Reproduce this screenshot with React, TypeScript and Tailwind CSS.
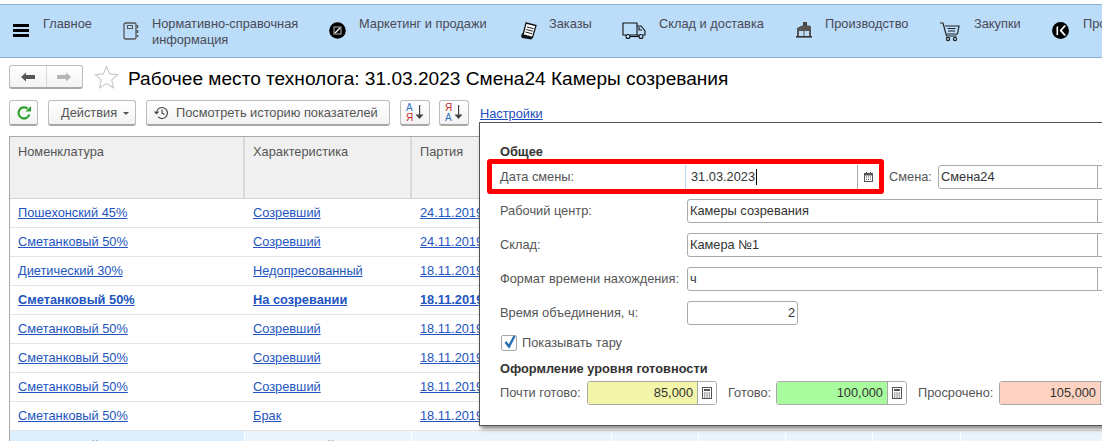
import type { ReactNode } from "react";

const Notebook = () => (
  <svg width="16" height="18" viewBox="0 0 16 18" fill="none" stroke="#555" strokeWidth="1.3">
    <rect x="1" y="1" width="12" height="16" rx="1.5" />
    <rect x="4.5" y="3.5" width="5" height="3" strokeWidth="1" />
    <path d="M14.5 3v3M14.5 8v3M14.5 13v2" strokeWidth="1.5" />
  </svg>
);

const Marketing = () => (
  <svg width="17" height="17" viewBox="0 0 17 17">
    <circle cx="8.5" cy="8.5" r="8.3" fill="#000" />
    <rect x="5" y="5" width="7" height="7" fill="none" stroke="#999" strokeWidth="1.2" />
    <path d="M6 11l5-5" stroke="#fff" strokeWidth="1.2" />
  </svg>
);

const Orders = () => (
  <svg width="17" height="18" viewBox="0 0 17 18" fill="none">
    <path d="M6 1l10 2.500-3.500 12L3 13z" fill="#fff" stroke="#111" strokeWidth="1.3" />
    <path d="M7 5l6.500 1.700M6.200 7.500l6.500 1.700M5.500 10l6.500 1.700" stroke="#222" strokeWidth="1" />
    <path d="M1 14l1.500-3.500L3 13l9.500 2.500-1 2L2 16z" fill="#111" />
  </svg>
);

const Truck = () => (
  <svg width="24" height="18" viewBox="0 0 24 18" fill="none" stroke="#111" strokeWidth="1.1">
    <path d="M4 13H1V1h14v12H8" />
    <path d="M15 4h4l1 1 3 4v4h-2M15 13h2" />
    <path d="M17 5v3h3" />
    <circle cx="6" cy="14.5" r="2" />
    <circle cx="19" cy="14.5" r="2" />
    <path d="M8 14.5h9" />
  </svg>
);

const Factory = () => (
  <svg width="16" height="16" viewBox="0 0 16 16">
    <path d="M7 0h4v4H7z" fill="#444" />
    <path d="M1 6l5-2.500h8l1 1.500v9H1z" fill="#555" />
    <rect x="3" y="9" width="4.500" height="5" fill="#bbddfa" />
    <rect x="8.500" y="9" width="4.500" height="5" fill="#bbddfa" />
    <rect y="14" width="16" height="1.6" fill="#333" />
  </svg>
);

const Cart = () => (
  <svg width="20" height="20" viewBox="0 0 20 20" fill="none" stroke="#222" strokeWidth="1.2">
    <path d="M0 1h3l3.5 13h10" />
    <path d="M5 4h14l-1.5 8H7" />
    <path d="M7.5 6.5h8M8 9h7" />
    <circle cx="8" cy="17" r="1.6" />
    <circle cx="15" cy="17" r="1.6" />
  </svg>
);

const KLogo = () => (
  <svg width="17" height="17" viewBox="0 0 17 17">
    <circle cx="8.5" cy="8.5" r="8.4" fill="#000" />
    <path d="M4.5 5l1.6-1v9H4.5z" fill="#fff" />
    <path d="M7.5 8.5L12 3.5h2.3L10 8.5l4.3 5H12z" fill="#fff" />
  </svg>
);

const Calendar = () => (
  <svg width="9" height="10" viewBox="0 0 9 10">
    <path d="M0 1h9v9H0z" fill="#555" />
    <path d="M1 3.5h7V9H1z" fill="#fff" />
    <path d="M2 4.5h1v1H2zM4 4.5h1v1H4zM6 4.5h1v1H6zM2 6.8h1v1H2zM4 6.8h1v1H4zM6 6.8h1v1H6z" fill="#555" />
    <path d="M2 0h1v2H2zM6 0h1v2H6z" fill="#555" />
  </svg>
);

const Calculator = () => (
  <svg width="10" height="12" viewBox="0 0 10 12">
    <rect x=".5" y=".5" width="9" height="11" fill="#fff" stroke="#555" />
    <path d="M2 2h6v2H2z" fill="#555" />
    <path d="M2 5.5h1.4v1H2zM4.3 5.5h1.4v1H4.3zM6.6 5.5H8v1H6.6zM2 7.5h1.4v1H2zM4.3 7.5h1.4v1H4.3zM6.6 7.5H8v1H6.6zM2 9.5h1.4v1H2zM4.3 9.5h1.4v1H4.3zM6.6 9.5H8v1H6.6z" fill="#555" />
  </svg>
);

const SortArrow = () => (
  <svg width="9" height="15" viewBox="0 0 9 15">
    <path d="M4 0h1.200v10H4z" fill="#444" />
    <path d="M0.500 9.500h8L4.500 14z" fill="#444" />
  </svg>
);

const btn =
  "flex items-center rounded-[3px] border border-[#bdbdbd] border-b-2 border-b-[#a8a8a8] bg-gradient-to-b from-white to-[#f3f3f3]";

const NavItem = ({ icon, iconBox, label, width }: { icon?: ReactNode; iconBox: string; label: ReactNode; width: string }) => (
  <div className={`flex shrink-0 ${width}`}>
    <div className={`flex shrink-0 pt-[17px] ${iconBox}`}>{icon}</div>
    <div className="pt-[11px] text-[#4a4a55] whitespace-nowrap">{label}</div>
  </div>
);

const Field = ({ label, children }: { label: string; children: ReactNode }) => (
  <div className="flex items-center h-[24px] mt-[10px]">
    <div className="w-[187px] shrink-0 whitespace-nowrap text-[#555]">{label}</div>
    {children}
  </div>
);

const BigInput = ({ value }: { value: string }) => (
  <div className="flex flex-1 h-[24px] items-center rounded-[3px] border border-[#a9a9a9] bg-white -mr-[20px] pl-[2px] text-[#333]">
    <span className="flex-1">{value}</span>
    <span className="h-full w-[20px] border-l border-[#a9a9a9]" />
  </div>
);

const NumField = ({ value, color, width, cell }: { value: string; color: string; width: string; cell: string }) => (
  <div className={`flex h-[24px] shrink-0 rounded-[3px] border border-[#a9a9a9] overflow-hidden ${width}`}>
    <div className={`flex shrink-0 items-center justify-end pr-[4px] text-[#333] ${cell} ${color}`}>{value}</div>
    <div className="flex flex-1 items-center justify-center border-l border-[#a9a9a9] bg-white">
      <Calculator />
    </div>
  </div>
);

const rows = [
  ["Пошехонский 45%", "Созревший", "24.11.2019"],
  ["Сметанковый 50%", "Созревший", "24.11.2019"],
  ["Диетический 30%", "Недопресованный", "18.11.2019"],
  ["Сметанковый 50%", "На созревании", "18.11.2019"],
  ["Сметанковый 50%", "Созревший", "18.11.2019"],
  ["Сметанковый 50%", "Созревший", "18.11.2019"],
  ["Сметанковый 50%", "Созревший", "18.11.2019"],
  ["Сметанковый 50%", "Брак", "18.11.2019"],
];

const cols = "grid grid-cols-[235px_167px_200px_87px_87px_87px_88px_140px]";

export default function App() {
  return (
    <div className="relative w-[1102px] h-[441px] overflow-hidden bg-white text-[12.8px] leading-[16px] font-['Liberation_Sans',Arial,sans-serif]">
      {/* top sections bar */}
      <div className="mt-[4px] flex h-[54px] border-y border-[#8fb0d0] bg-[#bbddfa]">
        <div className="flex w-[43px] shrink-0 flex-col gap-[2px] pl-[13px] pt-[19px]">
          <div className="h-[3px] w-[16px] bg-black" />
          <div className="h-[3px] w-[16px] bg-black" />
          <div className="h-[3px] w-[16px] bg-black" />
        </div>
        <NavItem width="w-[80px]" iconBox="" label="Главное" />
        <NavItem width="w-[206px]" iconBox="w-[29px]" icon={<Notebook />} label={<>Нормативно-справочная<br />информация</>} />
        <NavItem width="w-[191px]" iconBox="w-[30px]" icon={<Marketing />} label="Маркетинг и продажи" />
        <NavItem width="w-[102px]" iconBox="w-[29px]" icon={<Orders />} label="Заказы" />
        <NavItem width="w-[174px]" iconBox="w-[37px]" icon={<Truck />} label="Склад и доставка" />
        <NavItem width="w-[144px]" iconBox="w-[29px]" icon={<Factory />} label="Производство" />
        <NavItem width="w-[112px]" iconBox="w-[34px]" icon={<Cart />} label="Закупки" />
        <NavItem width="w-[60px]" iconBox="w-[31px]" icon={<KLogo />} label="Продажи" />
      </div>

      {/* title */}
      <div className="flex h-[32px] items-center pl-[9px] pt-[3px] box-content">
        <div className={`${btn} h-[24px] w-[74px]`}>
          <div className="flex h-full flex-1 items-center justify-center border-r border-[#d8d8d8]">
            <svg width="14" height="10" viewBox="0 0 14 10"><path d="M0 5l5-4.5V3h9v4H5v2.500z" fill="#555" /></svg>
          </div>
          <div className="flex h-full flex-1 items-center justify-center">
            <svg width="14" height="10" viewBox="0 0 14 10"><path d="M14 5L9 .5V3H0v4h9v2.500z" fill="#b5b5b5" /></svg>
          </div>
        </div>
        <svg className="ml-[11px]" width="25" height="25" viewBox="0 0 25 25">
          <path d="M12.500 1.500l3.200 7.400 8 .7-6 5.300 1.800 7.900-7-4.200-7 4.200 1.800-7.900-6-5.300 8-.7z" fill="#fff" stroke="#c9c9c9" strokeWidth="1.100" />
        </svg>
        <h1 className="ml-[9px] mt-[4px] text-[19.1px] leading-[24px] text-black whitespace-nowrap">
          Рабочее место технолога: 31.03.2023 Смена24 Камеры созревания
        </h1>
      </div>

      {/* toolbar */}
      <div className="mt-[7px] flex h-[26px] items-stretch pl-[9px]">
        <div className={`${btn} w-[29px] justify-center`}>
          <svg width="16" height="16" viewBox="0 0 16 16" fill="none">
            <path d="M13.300 9.500A5.500 5.500 0 1 1 11.500 3.600" stroke="#2ca02c" strokeWidth="2.200" />
            <path d="M9.500 6.500h5.500V1z" fill="#2ca02c" />
          </svg>
        </div>
        <div className={`${btn} ml-[10px] w-[88px] gap-[6px] pl-[12px] text-[#555]`}>
          Действия
          <span className="mt-[2px] border-x-[3px] border-t-[3px] border-x-transparent border-t-[#555]" />
        </div>
        <div className={`${btn} ml-[10px] w-[244px] gap-[7px] pl-[7px] text-[#555]`}>
          <svg width="15" height="14" viewBox="0 0 15 14" fill="none" stroke="#444" strokeWidth="1.200">
            <path d="M2.500 7a5.500 5.500 0 1 1 1.600 3.900" />
            <path d="M0.500 5.500l2 2.200 2-2.200" />
            <path d="M8 3.500V7l2.500 1.500" />
          </svg>
          Посмотреть историю показателей
        </div>
        <div className={`${btn} ml-[10px] w-[30px] justify-center gap-[2px]`}>
          <div className="flex flex-col text-[10px] leading-[10px]">
            <span className="text-[#2a6fc0]">А</span>
            <span className="text-[#c03030]">Я</span>
          </div>
          <SortArrow />
        </div>
        <div className={`${btn} ml-[9px] w-[30px] justify-center gap-[2px]`}>
          <div className="flex flex-col text-[10px] leading-[10px]">
            <span className="text-[#c03030]">Я</span>
            <span className="text-[#2a6fc0]">А</span>
          </div>
          <SortArrow />
        </div>
        <a className="ml-[11px] pt-[6px] text-[#1a4fc0] underline">Настройки</a>
      </div>

      {/* table */}
      <div className="ml-[9px] mt-[10px] w-[1200px] border-l border-t border-[#a9a9a9] text-[#555]">
        <div className={`${cols} h-[62px] bg-[#f0f0f0] border-b border-[#d4d4d4]`}>
          <div className="border-r-2 border-[#d9d9d9] pl-[8px] pt-[7px]">Номенклатура</div>
          <div className="border-r-2 border-[#d9d9d9] pl-[8px] pt-[7px]">Характеристика</div>
          <div className="pl-[8px] pt-[7px]">Партия</div>
        </div>
        {rows.map((r, i) => (
          <div key={i} className={`${cols} h-[29px] items-center border-b border-[#e4e4e4] text-[#2255c0] underline ${i === 3 ? "font-bold" : ""}`}>
            <div className="pl-[8px]">{r[0]}</div>
            <div className="pl-[8px]">{r[1]}</div>
            <div className="pl-[8px]">{r[2]}</div>
          </div>
        ))}
        <div className={`${cols} h-[29px] items-center text-[#333] bg-[#eaf4fd]`}>
          <div className="flex h-full items-center border-r border-white bg-[#dcedfb] pl-[8px]">Сметанковый 50%</div>
          <div className="flex h-full items-center border-r border-white pl-[8px]">Пресованный</div>
          <div className="flex h-full items-center border-r border-white pl-[8px]">18.11.2019</div>
          <div className="flex h-full items-center justify-end border-r border-white pr-[4px]">244,0</div>
          <div className="flex h-full items-center justify-end border-r border-white pr-[4px]">135</div>
          <div className="flex h-full items-center justify-end border-r border-white pr-[4px]">0</div>
          <div className="flex h-full items-center justify-end border-r border-white pr-[4px]">0</div>
          <div className="flex h-full items-center pl-[4px]">01.03.2023 12:13</div>
        </div>
      </div>

      {/* settings popup */}
      <div className="absolute left-[479px] top-[122px] h-[304px] w-[660px] border border-[#555] bg-white pl-[20px] pr-[40px] pt-[22px] shadow-[2px_3px_4px_rgba(0,0,0,0.45)]">
        <div className="font-bold leading-[14px] text-[#333]">Общее</div>

        <div className="-ml-[13px] flex items-center">
          <div className="flex h-[35px] w-[397px] shrink-0 items-center rounded-[3px] border-[5px] border-[#ff0000]">
            <div className="w-[193px] shrink-0 pl-[8px] text-[#555]">Дата смены:</div>
            <div className="flex h-[24px] flex-1 items-center border-l border-[#b5d5f2] pl-[5px] text-[#333]">
              <span className="border-r border-black pr-[1px]">31.03.2023</span>
              <span className="ml-auto flex h-full w-[22px] items-center justify-center border-l border-[#a9a9a9]">
                <Calendar />
              </span>
            </div>
          </div>
          <span className="ml-[5px] w-[44px] shrink-0 text-[#555]">Смена:</span>
          <div className="ml-[5px] flex h-[24px] flex-1 items-center rounded-[3px] border border-[#a9a9a9] pl-[2px] text-[#333] -mr-[20px]">
            <span className="flex-1">Смена24</span>
            <span className="h-full w-[20px] border-l border-[#a9a9a9]" />
          </div>
        </div>

        <div className="-mt-[5px]">
          <Field label="Рабочий центр:"><BigInput value="Камеры созревания" /></Field>
          <Field label="Склад:"><BigInput value="Камера №1" /></Field>
          <Field label="Формат времени нахождения:"><BigInput value="ч" /></Field>
          <Field label="Время объединения, ч:">
            <div className="flex h-[24px] w-[111px] items-center justify-end rounded-[3px] border border-[#a9a9a9] pr-[2px] text-[#333]">2</div>
          </Field>
        </div>

        <div className="mt-[10px] flex h-[16px] items-center pl-[1px]">
          <div className="relative h-[16px] w-[16px] rounded-[2px] border border-[#a9a9a9] bg-white">
            <svg className="absolute left-[1px] -top-[2px]" width="14" height="16" viewBox="0 0 14 16" fill="none">
              <path d="M2.500 8l3.500 4.500L11.500 2" stroke="#2a6fb5" strokeWidth="2.400" />
            </svg>
          </div>
          <span className="ml-[5px] text-[#555]">Показывать тару</span>
        </div>

        <div className="mt-[11px] font-bold leading-[14px] text-[#333]">Оформление уровня готовности</div>

        <div className="mt-[5px] flex items-center text-[#555]">
          <span className="w-[87px] shrink-0">Почти готово:</span>
          <NumField value="85,000" color="bg-[#f2f5a8]" width="w-[130px]" cell="w-[109px]" />
          <span className="w-[59px] shrink-0 pl-[11px]">Готово:</span>
          <NumField value="100,000" color="bg-[#a9fc9e]" width="w-[131px]" cell="w-[110px]" />
          <span className="ml-[11px] w-[81px] shrink-0">Просрочено:</span>
          <NumField value="105,000" color="bg-[#fdd2c0]" width="w-[122px]" cell="w-[100px]" />
        </div>
      </div>
    </div>
  );
}
